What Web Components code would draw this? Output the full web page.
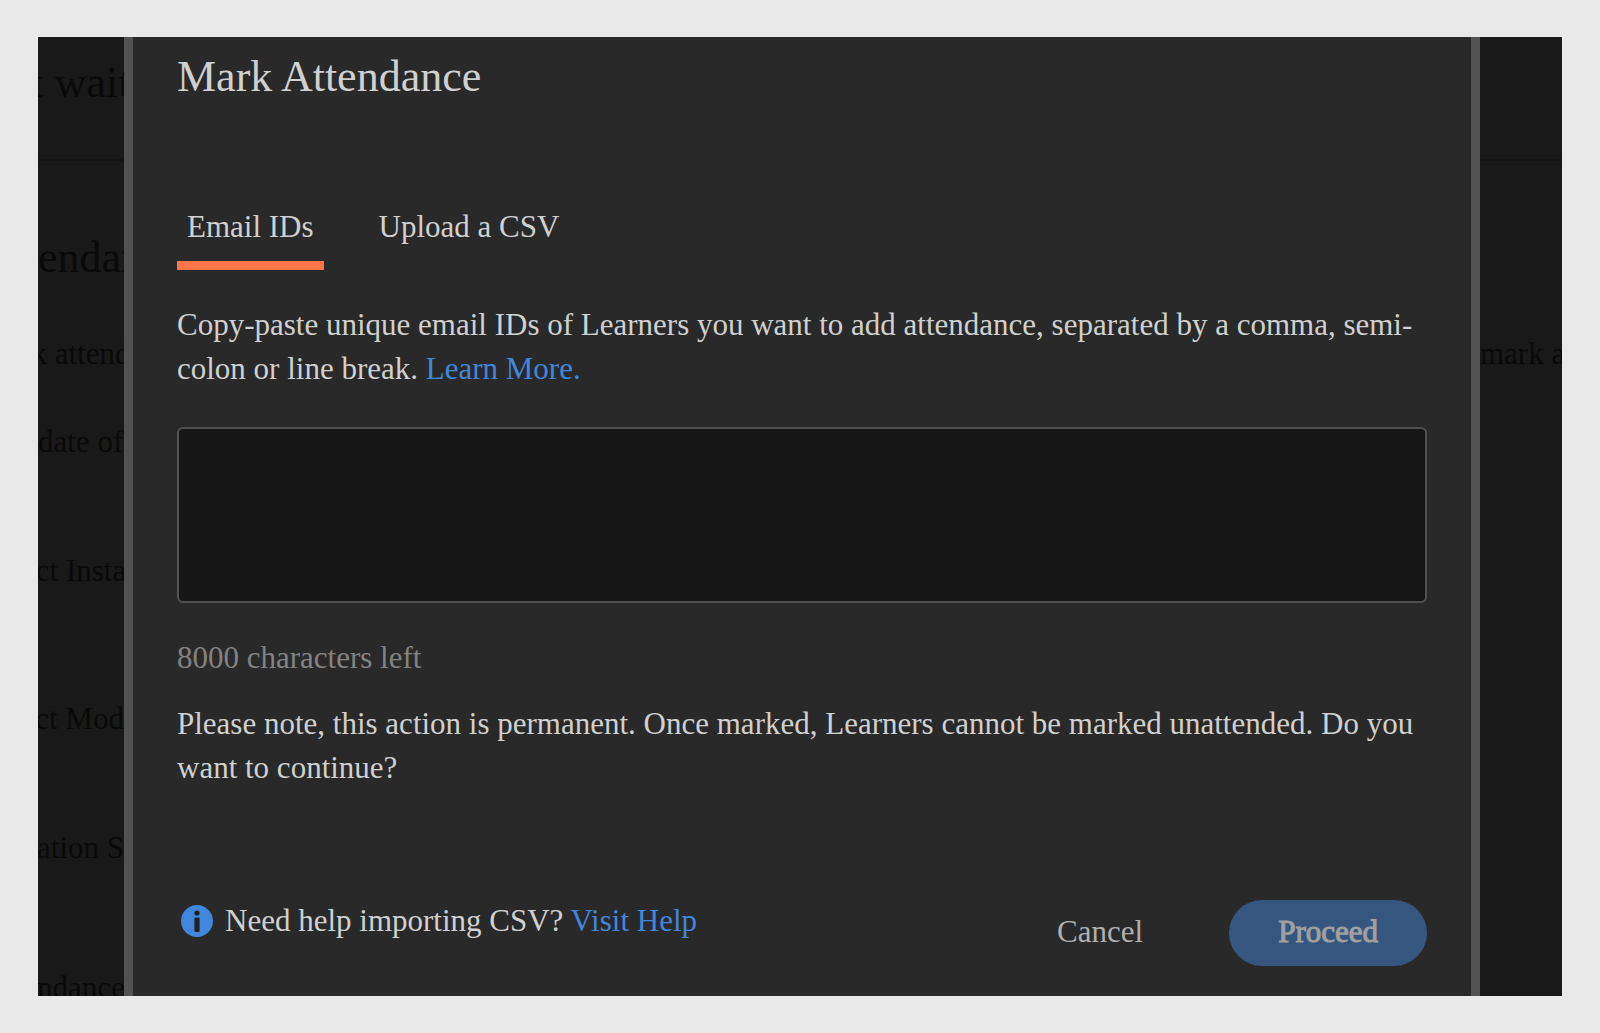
<!DOCTYPE html>
<html lang="en">
<head>
<meta charset="utf-8">
<title>Mark Attendance</title>
<style>
body { margin: 0; background: #e9e9e9; font-family: "Liberation Serif", serif; }
</style>
</head>
<body>
<attendance-app></attendance-app>
<script>
const define = (name, html) => customElements.define(name, class extends HTMLElement {
  constructor() {
    super();
    this.attachShadow({ mode: "open" }).innerHTML = html;
  }
});

/* One line of the dimmed page that shows beside the dialog */
define("page-line", `
<style>
  :host { display: flex; justify-content: flex-start; overflow: hidden; white-space: nowrap; font-size: 31px; line-height: 44px; }
  :host([large]) { font-size: 44px; line-height: 48px; }
  :host([align="end"]) { justify-content: flex-end; }
  :host([align="center"]) { justify-content: center; }
  :host([cut]) { height: 30px; }
</style><span><slot></slot></span>`);

define("page-rule", `<style>:host { display: block; height: 2px; background: #131313; }</style>`);

define("dialog-tab", `
<style>
  :host { display: block; }
  button { display: block; background: none; border: 0; border-bottom: 9px solid transparent; padding: 0 10px 12px; margin: 0; font: inherit; line-height: 44px; color: inherit; }
  :host([selected]) button { border-bottom-color: #ff7549; }
</style><button type="button"><slot></slot></button>`);

define("text-link", `
<style>:host { display: inline; } a { color: #4186db; text-decoration: none; }</style>
<a href="#"><slot></slot></a>`);

define("action-button", `
<style>
  :host { display: block; }
  button { height: 66px; padding: 0 49px 2px; border: 0; border-radius: 33px; background: none; color: #b0b0b0; font: inherit; line-height: 44px; }
  :host([primary]) button { background: #35577f; color: #a0a0a0; -webkit-text-stroke: 1px #a0a0a0; }
</style><button type="button"><slot></slot></button>`);

define("info-icon", `
<style>:host { display: block; width: 32px; height: 32px; } svg { display: block; }</style>
<svg width="32" height="32" viewBox="0 0 32 32" aria-hidden="true">
  <circle cx="16" cy="16" r="16" fill="#4286dc"/>
  <circle cx="16" cy="8" r="2.6" fill="#222"/>
  <rect x="13.4" y="12.5" width="5.2" height="14.5" rx="1" fill="#222"/>
</svg>`);

define("attendance-dialog", `
<style>
  :host { display: block; background: #292929; border: solid #525252; border-width: 0 9px; padding: 16px 44px 29px; box-sizing: border-box; color: #d0d0d0; font-size: 31px; line-height: 44px; min-width: 0; }
  h1, p { margin: 0; font-weight: 400; }
  h1 { font-size: 44px; line-height: 48px; }
  .tabs { display: flex; gap: 45px; margin-top: 104px; }
  .intro { margin-top: 33px; }
  textarea { display: block; box-sizing: border-box; width: 100%; height: 176px; margin-top: 36px; padding: 12px; background: #161616; border: 2px solid #505050; border-radius: 6px; color: inherit; font: inherit; resize: none; }
  .count { margin-top: 33px; color: #828282; }
  .note { margin-top: 22px; }
  footer { display: flex; justify-content: space-between; align-items: center; margin-top: 109px; }
  .help { display: flex; align-items: center; gap: 12px; padding: 0 0 24px 4px; }
  .actions { display: flex; gap: 37px; }
</style>
<h1>Mark Attendance</h1>
<div class="tabs"><dialog-tab selected>Email IDs</dialog-tab><dialog-tab>Upload a CSV</dialog-tab></div>
<p class="intro"><label for="emails">Copy-paste unique email IDs of Learners you want to add attendance, separated by a comma, semi-colon or line break.</label> <text-link>Learn More.</text-link></p>
<textarea id="emails" maxlength="8000"></textarea>
<p class="count">8000 characters left</p>
<p class="note">Please note, this action is permanent. Once marked, Learners cannot be marked unattended. Do you want to continue?</p>
<footer>
  <div class="help"><info-icon></info-icon><span>Need help importing CSV? <text-link>Visit Help</text-link></span></div>
  <div class="actions"><action-button>Cancel</action-button><action-button primary>Proceed</action-button></div>
</footer>`);

define("attendance-app", `
<style>
  :host { display: grid; grid-template-columns: 86px minmax(0, 1fr) 82px; margin: 37px 38px; background: #191919; color: #090909; }
  .side { min-width: 0; overflow: hidden; }
  .side > * { margin-top: 85px; }
  .side > page-line:first-child { margin-top: 22px; }
  .side > page-rule { margin-top: 52px; }
  .right > page-rule { margin-top: 122px; }
  .side > .section { margin-top: 73px; }
  .side > .lead { margin-top: 50px; }
  .side > .date { margin-top: 44px; }
  .side > .module { margin-top: 104px; }
  .side > .last { margin-top: 96px; }
  .right > .lead { margin-top: 171px; }
</style>
<div class="side">
  <page-line large align="center">t wait</page-line>
  <page-rule></page-rule>
  <page-line large class="section">endan</page-line>
  <page-line class="lead" align="center">k attend</page-line>
  <page-line class="date">date of</page-line>
  <page-line align="center">ct Insta</page-line>
  <page-line class="module" align="end">ct Mod</page-line>
  <page-line align="end">tation S</page-line>
  <page-line class="last" align="center" cut>ndance</page-line>
</div>
<attendance-dialog></attendance-dialog>
<div class="side right">
  <page-rule></page-rule>
  <page-line class="lead">mark at</page-line>
</div>`);
</script>
</body>
</html>
